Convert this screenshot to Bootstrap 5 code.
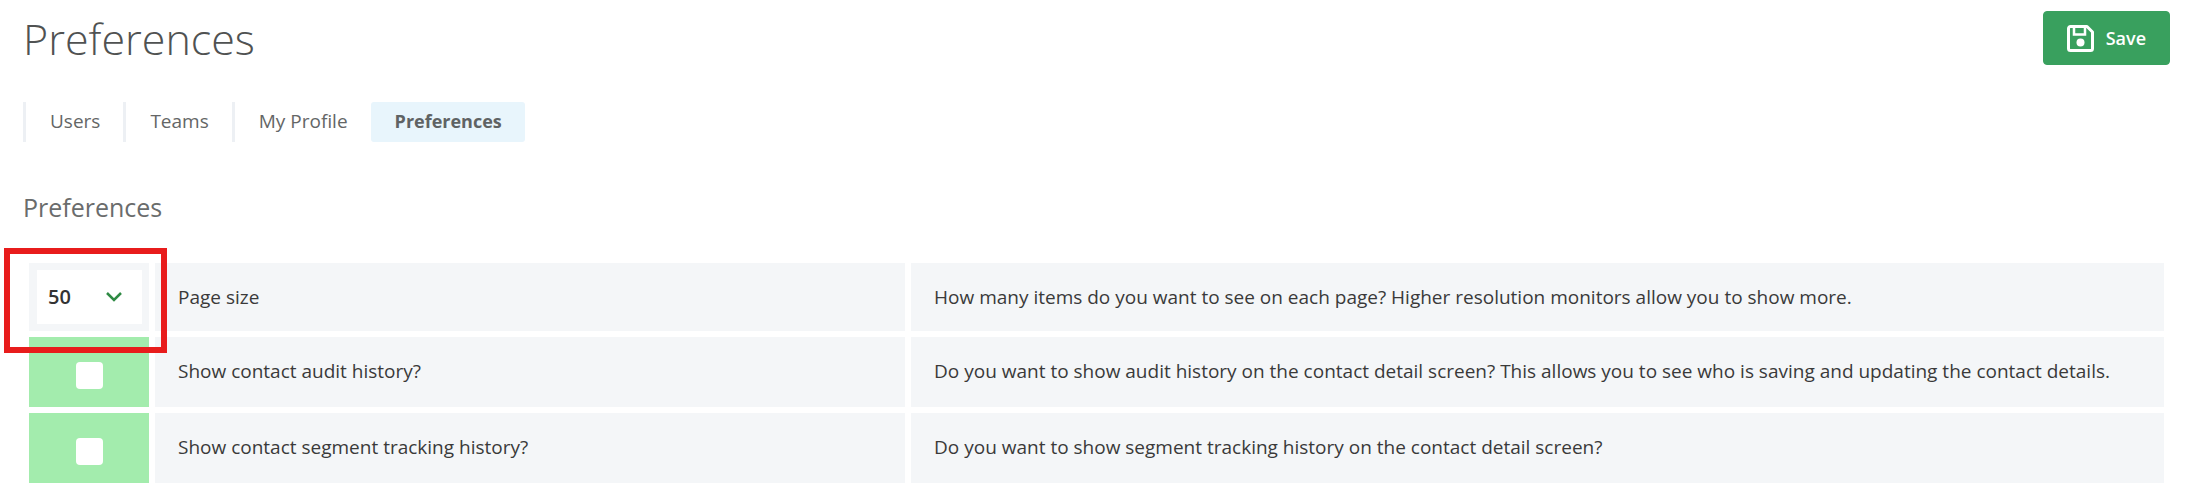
<!DOCTYPE html>
<html lang="en">
<head>
<meta charset="utf-8">
<meta name="viewport" content="width=device-width, initial-scale=1">
<title>Preferences</title>
<link href="https://cdn.jsdelivr.net/npm/bootstrap@5.3.0/dist/css/bootstrap.min.css" rel="stylesheet">
<style>
  body { font-family: "Open Sans", "Noto Sans", sans-serif; font-size: 19px; font-weight: 400; line-height: 28px; color: #3a3a3a; background: #fff; }
  .page { padding: 11px 23px 16px; }
  .page-title { font-size: 43px; line-height: 56px; font-weight: 300; color: #505252; }
  .section-title { font-size: 25px; line-height: 36px; font-weight: 400; color: #6a6c6c; margin: 47px 0 32px; }
  .btn-save { --bs-btn-color: #fff; --bs-btn-bg: #39a05e; --bs-btn-border-color: #39a05e; --bs-btn-hover-color: #fff; --bs-btn-hover-bg: #2f8a50; --bs-btn-hover-border-color: #2f8a50; font-size: 18px; font-weight: 600; height: 54px; padding: 0 23px; border-radius: 4px; gap: 12px; }
  .tabs { margin-top: 35px; }
  .tabs .nav-link { height: 40px; line-height: 38px; padding: 0 23px 0 24px; font-size: 19px; color: #646666; border-left: 3px solid #edf0f4; border-radius: 0; }
  .tabs .nav-link.active { padding: 0 23px 0 21px; font-size: 18px; font-weight: 700; color: #5f6364; background: #e8f5fc; border-left-color: #e8f5fc; border-radius: 3px; }
  .prefs { border-collapse: separate; border-spacing: 6px; }
  .prefs td, .prefs th { height: 70px; padding: 0 23px 2px; background: #f4f6f8; font-weight: 400; vertical-align: middle; }
  .prefs tr:first-child > * { height: 68px; padding-bottom: 0; }
  .prefs .control { width: 120px; padding: 0 7px 0 8px; }
  .prefs .name { width: 35.33%; }
  .prefs .control.toggle { background: #a3ecad; }
  .size-select { height: 54px; padding: 0 11px; border: 0; border-radius: 0; font-size: 20px; font-weight: 600; color: #333; background: #fff url("data:image/svg+xml,%3Csvg xmlns='http://www.w3.org/2000/svg' viewBox='0 0 16 10'%3E%3Cpath d='M1 1l7 7 7-7' fill='none' stroke='%232f8a44' stroke-width='2.500'/%3E%3C/svg%3E") no-repeat right 20px center / 16px 10px; }
  .toggle .form-check-input { width: 27px; height: 27px; margin: 7px 0 0; border: 0; border-radius: 4px; background-color: #fff; }
  .toggle .form-check-input:checked { background-color: #39a05e; }
  .callout-frame { position: absolute; inset: -22px -25px -29px -33px; border: 6px solid #e81c1c; pointer-events: none; }
</style>
</head>
<body>
<main class="page">
  <header class="d-flex justify-content-between align-items-start">
    <h1 class="page-title m-0">Preferences</h1>
    <button type="button" class="btn btn-save d-inline-flex align-items-center">
      <svg width="27" height="27" viewBox="0 0 27 27" fill="none" stroke="#fff" stroke-width="3" aria-hidden="true">
        <path d="M3.500 1.500H20L25.500 7V23.500a2 2 0 0 1-2 2H3.500a2 2 0 0 1-2-2V3.500a2 2 0 0 1 2-2Z" stroke-linejoin="round"/>
        <path d="M7 2V9.500H18V2" stroke-width="2.500"/>
        <circle cx="13.500" cy="17.500" r="4" fill="#fff" stroke="none"/>
      </svg>
      <span>Save</span>
    </button>
  </header>
  <nav aria-label="Settings">
    <ul class="nav tabs">
      <li class="nav-item"><a class="nav-link" href="#users">Users</a></li>
      <li class="nav-item"><a class="nav-link" href="#teams">Teams</a></li>
      <li class="nav-item"><a class="nav-link" href="#profile">My Profile</a></li>
      <li class="nav-item"><a class="nav-link active" aria-current="page" href="#preferences">Preferences</a></li>
    </ul>
  </nav>
  <h2 class="section-title">Preferences</h2>
  <table class="prefs w-100">
    <tbody>
      <tr>
        <td class="control">
          <div class="position-relative">
            <select class="form-select size-select" id="page-size">
              <option>25</option>
              <option selected>50</option>
              <option>100</option>
            </select>
            <div class="callout-frame"></div>
          </div>
        </td>
        <th class="name" scope="row"><label for="page-size">Page size</label></th>
        <td>How many items do you want to see on each page? Higher resolution monitors allow you to show more.</td>
      </tr>
      <tr>
        <td class="control toggle"><div class="d-flex justify-content-center"><input class="form-check-input" type="checkbox" id="audit"></div></td>
        <th class="name" scope="row"><label for="audit">Show contact audit history?</label></th>
        <td>Do you want to show audit history on the contact detail screen? This allows you to see who is saving and updating the contact details.</td>
      </tr>
      <tr>
        <td class="control toggle"><div class="d-flex justify-content-center"><input class="form-check-input" type="checkbox" id="segment"></div></td>
        <th class="name" scope="row"><label for="segment">Show contact segment tracking history?</label></th>
        <td>Do you want to show segment tracking history on the contact detail screen?</td>
      </tr>
    </tbody>
  </table>
</main>
<script src="https://cdn.jsdelivr.net/npm/bootstrap@5.3.0/dist/js/bootstrap.bundle.min.js"></script>
</body>
</html>
